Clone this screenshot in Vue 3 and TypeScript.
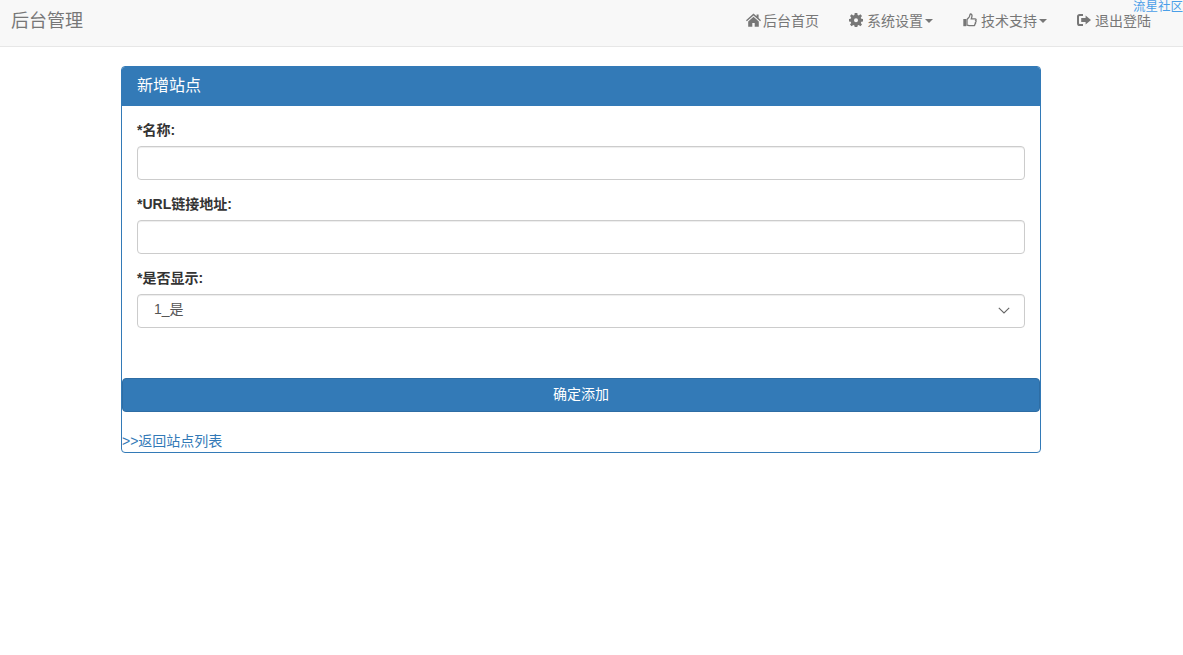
<script setup lang="ts">
import { ref } from 'vue'
const name = ref('')
const url = ref('')
const show = ref('1')
</script>

<template>
  <div class="page">
    <a class="community" href="#">流星社区</a>
    <nav class="navbar">
      <a class="brand" href="#">后台管理</a>
      <ul class="nav">
        <li>
          <a href="#">
            <svg class="icon" viewBox="0 0 15 14" width="15" height="14"><path d="M7.5 0.5 L0 7.2 L0.9 8.2 L7.5 2.4 L14.1 8.2 L15 7.2 L12.6 5 V1.4 H10.6 V3.2 Z M2.2 8.4 V13.8 H6.3 V10 H8.7 V13.8 H12.8 V8.4 L7.5 3.7 Z" fill="#777"/></svg>
            <span class="gap0 first">后台首页</span>
          </a>
        </li>
        <li>
          <a href="#">
            <svg class="icon" viewBox="0 0 14 14" width="14" height="14"><path fill="#777" fill-rule="evenodd" d="M5.7 0 H8.3 L8.6 2 L9.8 2.5 L11.4 1.3 L13 2.9 L11.8 4.5 L12.3 5.7 L14 6 V8.5 L12.3 8.8 L11.8 10 L13 11.6 L11.4 13.2 L9.8 12 L8.6 12.5 L8.3 14.3 H5.7 L5.4 12.5 L4.2 12 L2.6 13.2 L1 11.6 L2.2 10 L1.7 8.8 L0 8.5 V6 L1.7 5.7 L2.2 4.5 L1 2.9 L2.6 1.3 L4.2 2.5 L5.4 2 Z M7 5.2 A2 2 0 1 0 7 9.2 A2 2 0 1 0 7 5.2 Z"/></svg>
            <span class="gap1">系统设置</span><i class="caret"></i>
          </a>
        </li>
        <li>
          <a href="#">
            <svg class="icon" viewBox="0 0 14 14" width="14" height="14"><path fill="#777" d="M0.3 6 H3.2 V13.2 H0.3 Z"/><path fill="none" stroke="#777" stroke-width="1.3" d="M4 6.5 L6.3 3.8 C6.9 3 6.7 1.2 7.6 1 C8.9 0.8 9.4 2.6 8.6 4.8 L8.3 5.8 H12 C13.3 5.8 13.4 7.2 12.7 7.6 C13.3 8.2 13.1 9.2 12.4 9.5 C12.8 10.2 12.5 11 11.8 11.2 C12 12 11.5 12.7 10.7 12.7 H6.6 C5.6 12.7 5 12.1 4 12.1 Z"/></svg>
            <span class="gap1">技术支持</span><i class="caret"></i>
          </a>
        </li>
        <li>
          <a href="#">
            <svg class="icon" viewBox="0 0 14 14" width="14" height="14"><path fill="#777" d="M6 1 H2.6 C1 1 0 2 0 3.6 V10.4 C0 12 1 13 2.6 13 H6 V11 H3 C2.4 11 2 10.6 2 10 V4 C2 3.4 2.4 3 3 3 H6 Z M8.6 2.6 L14 7 L8.6 11.4 V8.9 H4.2 V5.1 H8.6 Z"/></svg>
            <span class="gap1">退出登陆</span>
          </a>
        </li>
      </ul>
    </nav>

    <section class="panel">
      <header class="panel-heading">新增站点</header>
      <form class="panel-body" @submit.prevent>
        <div class="group">
          <label for="f-name">*名称:</label>
          <input id="f-name" v-model="name" class="control" type="text" />
        </div>
        <div class="group">
          <label for="f-url">*URL链接地址:</label>
          <input id="f-url" v-model="url" class="control" type="text" />
        </div>
        <div class="group">
          <label for="f-show">*是否显示:</label>
          <div class="select-wrap">
            <select id="f-show" v-model="show" class="control select">
              <option value="1">1_是</option>
              <option value="0">0_否</option>
            </select>
            <svg class="chevron" viewBox="0 0 12 7" width="12" height="7"><path d="M0.8 0.8 L6 6 L11.2 0.8" fill="none" stroke="#666" stroke-width="1.1"/></svg>
          </div>
        </div>
      </form>
      <button class="submit" type="button">确定添加</button>
      <a class="back" href="#">&gt;&gt;返回站点列表</a>
    </section>
  </div>
</template>

<style>
html, body { margin: 0; background: #fff; }
</style>

<style scoped>
.page {
  position: relative;
  min-height: 655px;
  font-family: "Liberation Sans", "Noto Sans CJK SC", sans-serif;
  font-size: 14px;
  line-height: 20px;
  color: #333;
}
a { text-decoration: none; }
.community {
  position: absolute;
  top: -1px;
  right: 0;
  font-size: 12.5px;
  line-height: 16px;
  color: #4a9fe8;
  z-index: 1;
}
.navbar {
  display: flex;
  justify-content: space-between;
  align-items: flex-start;
  height: 46px;
  background: #f8f8f8;
  border-bottom: 1px solid #e7e7e7;
}
.brand {
  padding: 8px 11px 0;
  font-size: 18px;
  line-height: 26px;
  color: #777;
}
.nav {
  display: flex;
  list-style: none;
  margin: 0 17px 0 0;
  padding: 0;
}
.nav a {
  display: flex;
  align-items: center;
  padding: 11px 15px;
  color: #777;
}
.icon { flex: none; margin-top: -2px; }
.gap0 { margin-left: 3px; }
.gap1 { margin-left: 4px; }
.first { margin-left: 2px; }
.caret {
  width: 0;
  height: 0;
  margin-left: 2px;
  border-top: 4px solid #777;
  border-left: 4px solid transparent;
  border-right: 4px solid transparent;
}
.panel {
  box-sizing: border-box;
  width: 920px;
  height: 387px;
  margin: 19px 0 0 121px;
  border: 1px solid #337ab7;
  border-radius: 4px;
  background: #fff;
}
.panel-heading {
  height: 39px;
  padding: 0 15px;
  font-size: 16px;
  line-height: 37px;
  color: #fff;
  background: #337ab7;
  border-radius: 3px 3px 0 0;
}
.panel-body {
  padding: 15px 15px 0;
}
.group { margin-bottom: 15px; }
label {
  display: block;
  margin-bottom: 7px;
  font-weight: 700;
  line-height: 18px;
  color: #333;
}
.control {
  display: block;
  box-sizing: border-box;
  width: 100%;
  height: 34px;
  padding: 6px 12px;
  font: inherit;
  color: #555;
  background: #fff;
  border: 1px solid #ccc;
  border-radius: 4px;
  box-shadow: inset 0 1px 1px rgba(0, 0, 0, 0.075);
  outline: none;
}
.select-wrap { position: relative; }
.select {
  appearance: none;
  padding: 3px 12px 8px 16px;
}
.chevron {
  position: absolute;
  top: 13px;
  right: 15px;
  pointer-events: none;
}
.submit {
  display: block;
  box-sizing: border-box;
  width: 100%;
  height: 34px;
  margin-top: 50px;
  padding: 5px 12px 7px;
  font: inherit;
  color: #fff;
  background: #337ab7;
  border: 1px solid #2e6da4;
  border-radius: 4px;
  cursor: pointer;
}
.back {
  display: block;
  margin-top: 19px;
  color: #337ab7;
}
</style>
